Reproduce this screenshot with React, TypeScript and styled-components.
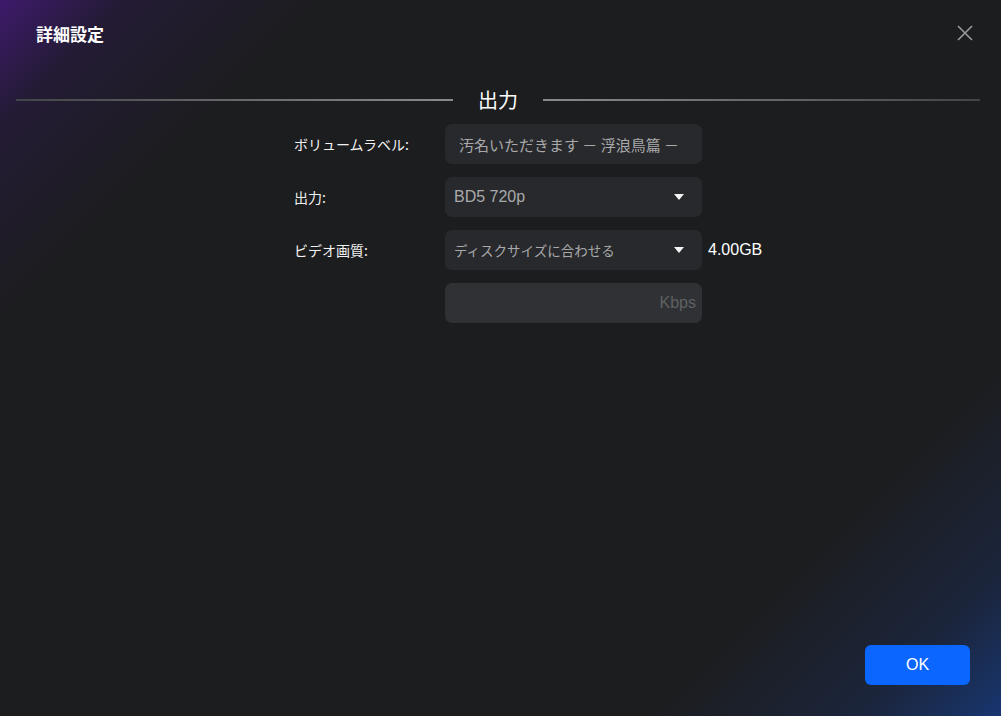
import React from "react";
import styled, { createGlobalStyle } from "styled-components";

const GlobalStyle = createGlobalStyle`
  html, body {
    margin: 0;
    padding: 0;
    background: #1c1d1f;
  }
  * {
    box-sizing: border-box;
  }
`;

const Dialog = styled.div`
  width: 1001px;
  height: 716px;
  overflow: hidden;
  font-family: "Liberation Sans", "Noto Sans CJK JP", sans-serif;
  color: #fff;
  background:
    linear-gradient(135deg, rgba(62, 26, 108, 1) 0px, rgba(40, 26, 66, 0.6) 90px, rgba(28, 29, 31, 0) 230px),
    linear-gradient(315deg, rgba(24, 54, 112, 1) 0px, rgba(26, 42, 78, 0.6) 100px, rgba(28, 29, 31, 0) 250px),
    #1c1d1f;
  display: flex;
  flex-direction: column;
`;

const Header = styled.div`
  height: 66px;
  display: flex;
  align-items: center;
  justify-content: space-between;
  padding: 0 22px 0 36px;
`;

const Title = styled.h1`
  margin: 0;
  font-family: "Noto Sans CJK JP", sans-serif;
  font-size: 17px;
  font-weight: 700;
  color: #fff;
`;

const CloseButton = styled.button`
  width: 28px;
  height: 28px;
  padding: 0;
  border: none;
  background: none;
  display: flex;
  align-items: center;
  justify-content: center;
  cursor: pointer;
`;

const Section = styled.div`
  display: flex;
  align-items: center;
  gap: 25px;
  padding: 0 21px 0 16px;
  margin-top: 20px;
`;

const Line = styled.div<{ $side: "left" | "right" }>`
  flex: 1;
  height: 2px;
  background: ${(p) =>
    p.$side === "left"
      ? "linear-gradient(90deg, #434447, #8a8a8c)"
      : "linear-gradient(90deg, #8a8a8c, #434447)"};
`;

const SectionTitle = styled.span`
  font-family: "Noto Sans CJK JP", sans-serif;
  font-size: 20px;
  line-height: 28px;
  color: #fff;
`;

const Form = styled.div`
  display: grid;
  grid-template-columns: 151px 257px auto;
  grid-auto-rows: 40px;
  row-gap: 13px;
  margin: 10px 0 0 294px;
  align-items: center;
`;

const Label = styled.label`
  grid-column: 1;
  font-family: "Noto Sans CJK JP", sans-serif;
  font-size: 14px;
  color: #f2f2f2;
`;

const Field = styled.div<{ $muted?: boolean }>`
  grid-column: 2;
  height: 40px;
  border-radius: 7px;
  background: ${(p) => (p.$muted ? "#303134" : "#28292c")};
  display: flex;
  align-items: center;
  justify-content: space-between;
  padding: 0 12px 0 9px;
  font-size: 16px;
  color: #a9a9ab;
`;

const JpValue = styled.span<{ $size: number }>`
  font-family: "Noto Sans CJK JP", sans-serif;
  font-size: ${(p) => p.$size}px;
  white-space: nowrap;
`;

const Unit = styled.span`
  margin-left: auto;
  margin-right: -6px;
  color: #5f6063;
  font-size: 16px;
`;

const Caret = styled.span`
  width: 0;
  height: 0;
  border-left: 5px solid transparent;
  border-right: 5px solid transparent;
  border-top: 6px solid #f4f4f4;
  margin-right: 6px;
`;

const Size = styled.span`
  grid-column: 3;
  margin-left: 6px;
  font-size: 16px;
  color: #fff;
`;

const Spacer = styled.div`
  flex: 1;
`;

const Footer = styled.div`
  display: flex;
  justify-content: flex-end;
  padding: 0 31px 31px 0;
`;

const OkButton = styled.button`
  width: 105px;
  height: 40px;
  border: none;
  border-radius: 6px;
  background: #0a66ff;
  color: #fff;
  font-family: "Liberation Sans", sans-serif;
  font-size: 16px;
  cursor: pointer;
`;

const App = () => {
  return (
    <>
      <GlobalStyle />
      <Dialog>
        <Header>
          <Title>詳細設定</Title>
          <CloseButton aria-label="close">
            <svg width="16" height="16" viewBox="0 0 16 16">
              <path d="M1 1 L15 15 M15 1 L1 15" stroke="#9a9a9c" strokeWidth="1.6" />
            </svg>
          </CloseButton>
        </Header>

        <Section>
          <Line $side="left" />
          <SectionTitle>出力</SectionTitle>
          <Line $side="right" />
        </Section>

        <Form>
          <Label>ボリュームラベル:</Label>
          <Field style={{ paddingLeft: 14 }}>
            <JpValue $size={15}>汚名いただきます － 浮浪鳥篇 －</JpValue>
          </Field>

          <Label>出力:</Label>
          <Field>
            <span>BD5 720p</span>
            <Caret />
          </Field>

          <Label>ビデオ画質:</Label>
          <Field>
            <JpValue $size={13.5}>ディスクサイズに合わせる</JpValue>
            <Caret />
          </Field>
          <Size>4.00GB</Size>

          <Field $muted>
            <Unit>Kbps</Unit>
          </Field>
        </Form>

        <Spacer />

        <Footer>
          <OkButton>OK</OkButton>
        </Footer>
      </Dialog>
    </>
  );
};

export default App;
